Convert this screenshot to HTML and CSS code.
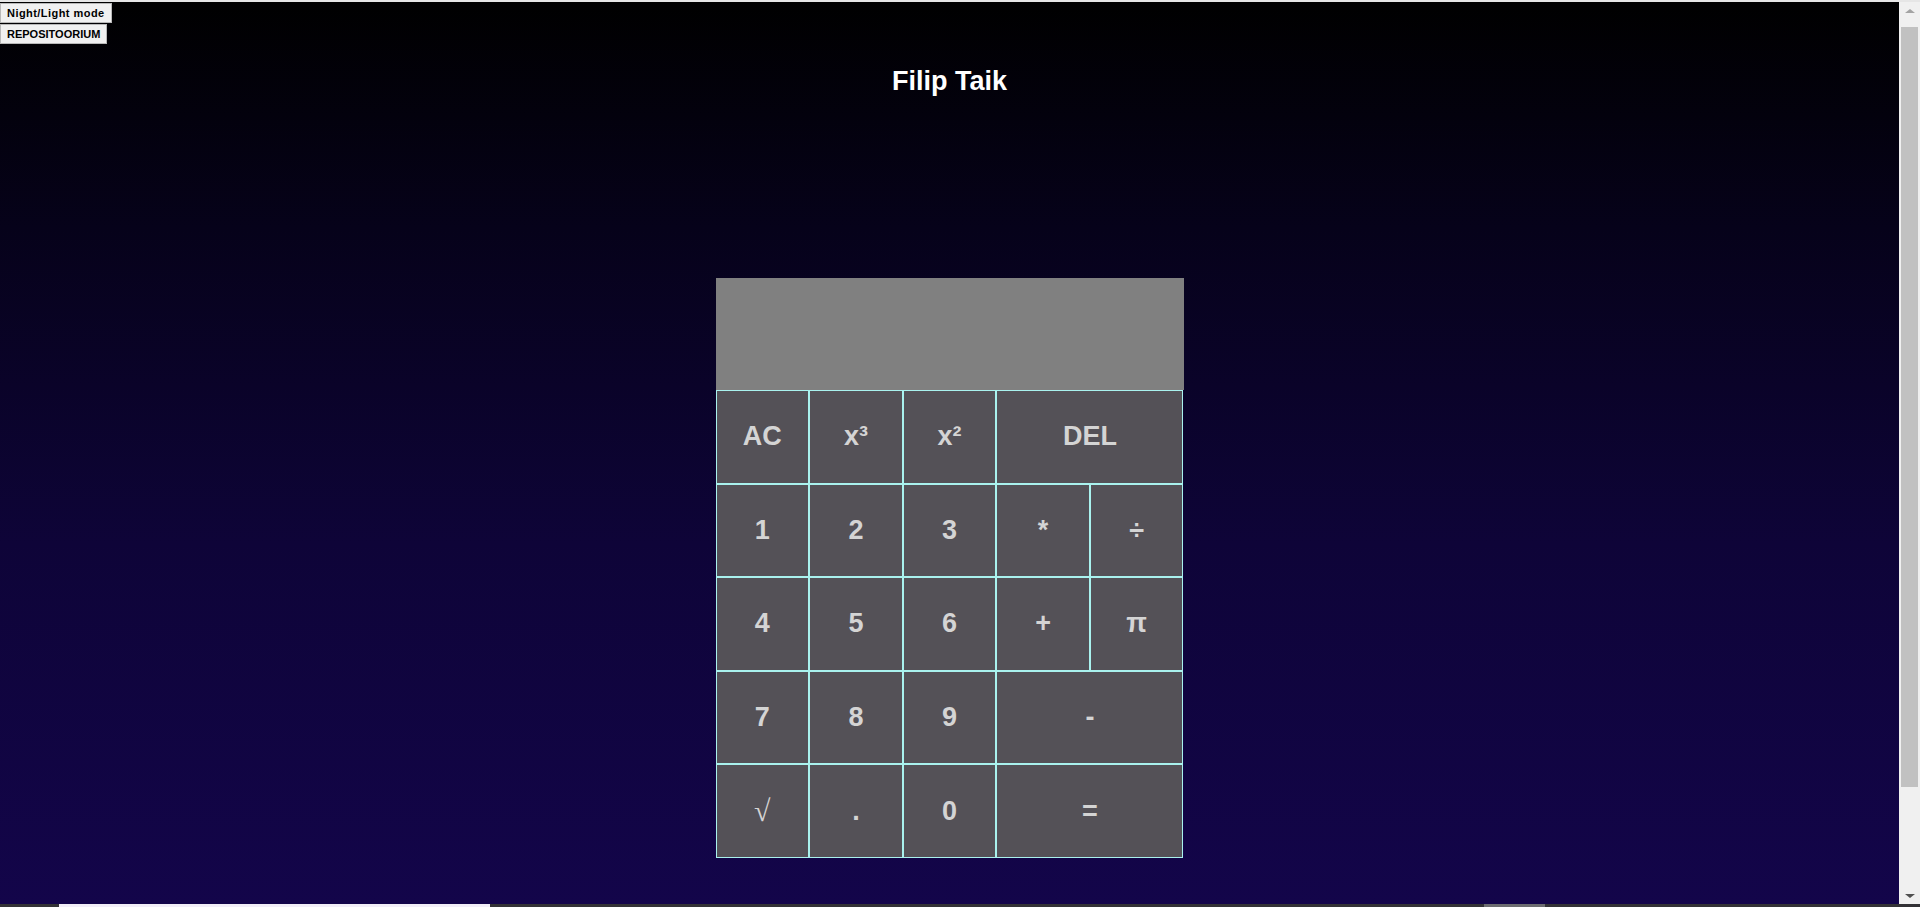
FILE: index.html
```html
<!DOCTYPE html>
<html lang="et">
<head>
<meta charset="utf-8">
<title>Filip Taik</title>
<link rel="stylesheet" href="styles.css">
</head>
<body>
<div class="screen">
  <div class="topstrip"></div>
  <div class="viewport">
    <main class="page">
      <div class="toolbar">
        <button class="tool-btn tool-mode">Night/Light mode</button>
        <button class="tool-btn">REPOSITOORIUM</button>
      </div>
      <h1 class="title">Filip Taik</h1>
      <div class="calc">
        <div class="display"></div>
        <div class="keys">
          <button class="key">AC</button>
          <button class="key">x³</button>
          <button class="key">x²</button>
          <button class="key wide">DEL</button>
          <button class="key">1</button>
          <button class="key">2</button>
          <button class="key">3</button>
          <button class="key">*</button>
          <button class="key">÷</button>
          <button class="key">4</button>
          <button class="key">5</button>
          <button class="key">6</button>
          <button class="key">+</button>
          <button class="key">π</button>
          <button class="key">7</button>
          <button class="key">8</button>
          <button class="key">9</button>
          <button class="key wide">-</button>
          <button class="key sqrt">√</button>
          <button class="key">.</button>
          <button class="key">0</button>
          <button class="key wide">=</button>
        </div>
      </div>
    </main>
    <div class="scrollbar">
      <div class="arrow arrow-up"></div>
      <div class="track"><div class="thumb"></div></div>
      <div class="arrow arrow-down"></div>
    </div>
  </div>
  <div class="bottombar">
    <div class="seg seg-light"></div>
    <div class="seg-gap"></div>
    <div class="seg seg-mid"></div>
  </div>
</div>
</body>
</html>
```
FILE: styles.css
```css
html, body {
  margin: 0;
  padding: 0;
  height: 100%;
  overflow: hidden;
}

body {
  font-family: "Liberation Sans", Arial, sans-serif;
  background: #000;
}

.screen {
  display: flex;
  flex-direction: column;
  width: 1920px;
  height: 907px;
}

.topstrip {
  height: 2px;
  background: #e6e6e6;
  flex: none;
}

.viewport {
  flex: 1;
  display: flex;
  min-height: 0;
}

.page {
  flex: 1;
  background: linear-gradient(to bottom, #000000 0%, #06021a 25%, #0e0438 60%, #13054a 100%);
  display: flex;
  flex-direction: column;
  align-items: center;
}

.toolbar {
  align-self: flex-start;
  display: flex;
  flex-direction: column;
  align-items: flex-start;
  padding-top: 1px;
}

.tool-btn {
  font-family: "Liberation Sans", Arial, sans-serif;
  font-size: 11px;
  font-weight: bold;
  color: #000;
  background: #f0f0f0;
  border: 1px solid #b8b8b8;
  padding: 0 6px;
  height: 20px;
  line-height: 18px;
  margin: 0 0 1px 0;
}

.tool-mode {
  letter-spacing: 0.45px;
}

.title {
  margin: 20px 0 0 0;
  font-size: 27px;
  font-weight: bold;
  color: #ffffff;
  line-height: 32px;
}

.calc {
  margin-top: 181px;
  width: 468px;
  display: flex;
  flex-direction: column;
}

.display {
  height: 112px;
  background: #808080;
}

.keys {
  display: grid;
  grid-template-columns: repeat(5, 1fr);
  grid-template-rows: repeat(5, 93.6px);
}

.key {
  font-family: "Liberation Sans", Arial, sans-serif;
  font-size: 27px;
  font-weight: bold;
  color: #d4d4d4;
  background: #545157;
  border: 1px solid #a9f2ee;
  margin: 0;
  padding: 0;
}

.key.wide {
  grid-column: span 2;
}

.key.sqrt {
  font-family: "Liberation Serif", "Times New Roman", serif;
  font-weight: normal;
  font-size: 30px;
}

.scrollbar {
  width: 21px;
  flex: none;
  background: #f0f0f0;
  display: flex;
  flex-direction: column;
  align-items: center;
}

.arrow {
  height: 17px;
  width: 100%;
  display: flex;
  align-items: center;
  justify-content: center;
  flex: none;
}

.arrow-up::before {
  content: "";
  border-left: 5px solid transparent;
  border-right: 5px solid transparent;
  border-bottom: 4px solid #a3a3a3;
}

.arrow-down::before {
  content: "";
  border-left: 5px solid transparent;
  border-right: 5px solid transparent;
  border-top: 4px solid #505050;
}

.track {
  flex: 1;
  width: 100%;
  display: flex;
  justify-content: center;
  padding-top: 8px;
}

.thumb {
  width: 17px;
  height: 760px;
  background: #c1c1c1;
}

.bottombar {
  height: 3px;
  flex: none;
  background: #333236;
  display: flex;
}

.seg-light {
  margin-left: 59px;
  width: 431px;
  background: #f2eef8;
}

.seg-gap {
  width: 994px;
}

.seg-mid {
  width: 61px;
  background: #6c6c70;
}
```
